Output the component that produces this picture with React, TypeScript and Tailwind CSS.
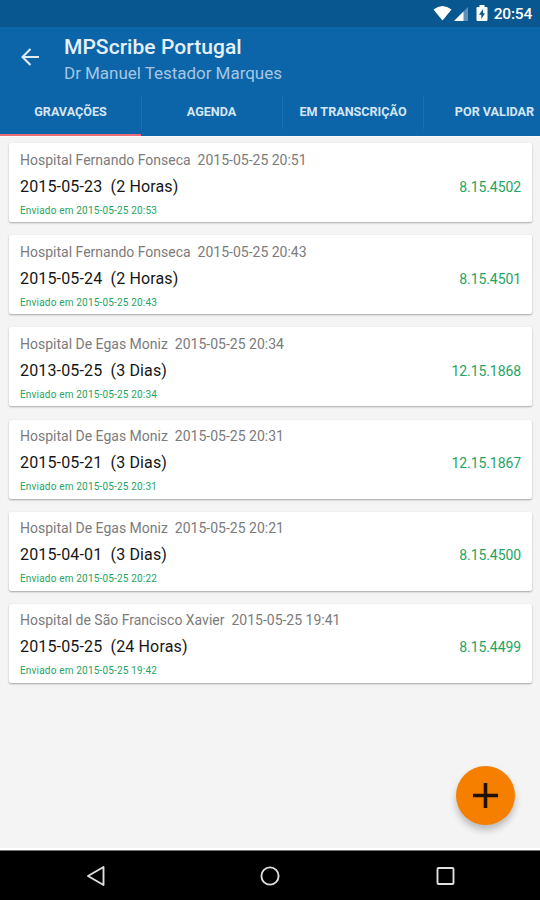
const recordings = [
  { place: "Hospital Fernando Fonseca", at: "2015-05-25 20:51", date: "2015-05-23", span: "(2 Horas)", sent: "2015-05-25 20:53", code: "8.15.4502" },
  { place: "Hospital Fernando Fonseca", at: "2015-05-25 20:43", date: "2015-05-24", span: "(2 Horas)", sent: "2015-05-25 20:43", code: "8.15.4501" },
  { place: "Hospital De Egas Moniz", at: "2015-05-25 20:34", date: "2013-05-25", span: "(3 Dias)", sent: "2015-05-25 20:34", code: "12.15.1868" },
  { place: "Hospital De Egas Moniz", at: "2015-05-25 20:31", date: "2015-05-21", span: "(3 Dias)", sent: "2015-05-25 20:31", code: "12.15.1867" },
  { place: "Hospital De Egas Moniz", at: "2015-05-25 20:21", date: "2015-04-01", span: "(3 Dias)", sent: "2015-05-25 20:22", code: "8.15.4500" },
  { place: "Hospital de São Francisco Xavier", at: "2015-05-25 19:41", date: "2015-05-25", span: "(24 Horas)", sent: "2015-05-25 19:42", code: "8.15.4499" },
];

type Recording = (typeof recordings)[number];

function StatusBar() {
  return (
    <div className="flex h-[27px] shrink-0 items-center justify-end bg-[#095791] pr-[8px] text-white">
      <svg width="19" height="16" viewBox="0 0 20 16" preserveAspectRatio="none" className="mr-[1px] mb-px">
        <path d="M0.5 4.5Q10 -2.5 19.5 4.5L10 15.5Z" fill="currentColor" />
      </svg>
      <svg width="16" height="16" viewBox="0 0 16 16" className="mr-[7px]">
        <path d="M15 1V15H1Z" fill="#5d91b9" />
        <path d="M10.5 5.5V15H1Z" fill="currentColor" />
      </svg>
      <svg width="12" height="18" viewBox="0 0 12 18" className="mr-[6px] mb-px">
        <path d="M3.5 1H8.5V3H10.5Q11.5 3 11.5 4V16Q11.5 17 10.5 17H1.5Q.5 17 .5 16V4Q.5 3 1.5 3H3.5Z" fill="currentColor" />
        <path d="M7 5L3 10.8H5.3V15L9 9.2H7Z" fill="#095791" />
      </svg>
      <span className="mt-[3px] text-[15.5px] leading-none font-medium tracking-[-0.2px]">20:54</span>
    </div>
  );
}

function Toolbar() {
  return (
    <div className="flex h-[62px] shrink-0 items-center">
      <svg width="20" height="20" viewBox="0 0 20 20" className="mr-[24px] mb-[2px] ml-[20px] shrink-0" fill="none" stroke="#e0ecf7" strokeWidth="2.1">
        <path d="M19 10H3M10.5 2L2.5 10L10.5 18" />
      </svg>
      <div className="pt-[3px] whitespace-nowrap">
        <div className="text-[21px] leading-[26px] font-medium tracking-[0.05px] text-[#e6f0fa]">MPScribe Portugal</div>
        <div className="text-[17px] leading-[26px] tracking-[-0.03px] text-[#a5c7e4]">Dr Manuel Testador Marques</div>
      </div>
    </div>
  );
}

function Tabs() {
  const tab = "flex w-[141px] shrink-0 justify-center";
  return (
    <div className="flex h-[47px] shrink-0 overflow-hidden text-[12.6px] leading-[46px] font-bold whitespace-nowrap text-[#d6e6f5]">
      <div className={`${tab} border-b-[2px] border-[#ea6a76]`}>GRAVAÇÕES</div>
      <Divider />
      <div className={tab}>AGENDA</div>
      <Divider />
      <div className={`${tab} pl-px`}>EM TRANSCRIÇÃO</div>
      <Divider />
      <div className={`${tab} pl-[2px]`}>POR VALIDAR</div>
    </div>
  );
}

function Divider() {
  return <div className="mt-[7px] -mr-px h-[33px] w-px shrink-0 bg-[#1d6fb0]" />;
}

function Card({ item }: { item: Recording }) {
  return (
    <div className="flex h-[79px] shrink-0 items-center justify-between rounded-[2px] bg-white pr-[11px] pl-[11px] whitespace-pre shadow-[0_1px_2px_rgba(0,0,0,0.32)]">
      <div className="pt-[2px]">
        <div className="text-[14px] leading-[24px] text-[#7b7b7b]">{`${item.place}  ${item.at}`}</div>
        <div className="text-[16px] leading-[29px] tracking-[0.15px] text-[#161616]">{`${item.date}  ${item.span}`}</div>
        <div className="pt-px text-[10px] leading-[18px] tracking-[0.18px] text-[#1fa463]">Enviado em {item.sent}</div>
      </div>
      <div className="mt-[9px] text-[14px] tracking-[-0.08px] text-[#1fa463]">{item.code}</div>
    </div>
  );
}

export default function App() {
  return (
    <div className="relative flex h-[900px] w-[540px] flex-col overflow-hidden bg-[#f4f4f4] font-[Roboto,sans-serif]">
      <StatusBar />
      <header className="flex shrink-0 flex-col bg-[#0b65a8]">
        <Toolbar />
        <Tabs />
      </header>
      <main className="flex grow flex-col gap-[13.2px] border-t border-b-2 border-t-[#fbfafa] border-b-white pt-[6px] pr-[8px] pl-[9px]">
        {recordings.map((r) => (
          <Card key={r.code} item={r} />
        ))}
      </main>
      <button aria-label="Adicionar" className="absolute top-[765.5px] left-[456px] flex size-[59px] items-center justify-center rounded-full bg-[#f77f00] shadow-[0_5px_7px_rgba(0,0,0,0.24)]">
        <svg width="25" height="25" viewBox="0 0 25 25" stroke="#201205" strokeWidth="3.6">
          <path d="M12.5 0V25M0 12.5H25" />
        </svg>
      </button>
      <nav className="flex h-[50px] shrink-0 items-center justify-between border-t border-[#777] bg-black px-[84px]">
        <svg width="22" height="22" viewBox="0 0 22 22" fill="none" stroke="#dedede" strokeWidth="1.9" strokeLinejoin="round">
          <path d="M19.5 2V20L4 11Z" />
        </svg>
        <svg width="22" height="22" viewBox="0 0 22 22" fill="none" stroke="#dedede" strokeWidth="1.9">
          <circle cx="11" cy="11" r="8.6" />
        </svg>
        <svg width="22" height="22" viewBox="0 0 22 22" fill="none" stroke="#dedede" strokeWidth="1.9">
          <rect x="3.5" y="3" width="16" height="16" rx="1" />
        </svg>
      </nav>
    </div>
  );
}
